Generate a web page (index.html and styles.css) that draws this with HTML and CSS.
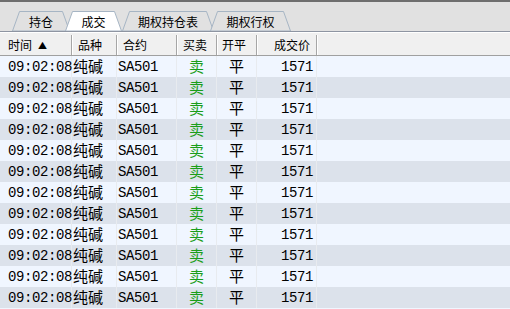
FILE: index.html
```html
<!DOCTYPE html>
<html lang="zh">

<head>
    <meta charset="UTF-8">
    <title>成交</title>
    <link rel="stylesheet" href="styles.css">
</head>

<body>
    <div class="topbar"></div>

    <!-- tabs -->
    <div class="tabbar">
        <div class="tab t1">
            <svg width="58" height="20"><polygon points="0.5,20 7.5,0.5 50.5,0.5 57.5,20" /></svg>
            持仓
        </div>
        <div class="tab t2 active">
            <svg width="57" height="20"><polygon points="0.5,20 7.5,0.5 49.5,0.5 56.5,20" /></svg>
            成交
        </div>
        <div class="tab t3">
            <svg width="92" height="20"><polygon points="0.5,20 7.5,0.5 84.5,0.5 91.5,20" /></svg>
            期权持仓表
        </div>
        <div class="tab t4">
            <svg width="81" height="20"><polygon points="0.5,20 7.5,0.5 73.5,0.5 80.5,20" /></svg>
            期权行权
        </div>
    </div>

    <!-- header -->
    <div class="head">
        <div class="hc c-time">时间<span class="sort">▲</span></div>
        <div class="hc c-var">品种</div>
        <div class="hc c-code">合约</div>
        <div class="hc c-side">买卖</div>
        <div class="hc c-oc">开平</div>
        <div class="hc c-price">成交价</div>
    </div>

    <!-- trades -->
    <div class="list">
        <div class="row"><div class="c c-time">09:02:08</div><div class="c c-var">纯碱</div><div class="c c-code">SA501</div><div class="c c-side">卖</div><div class="c c-oc">平</div><div class="c c-price">1571</div></div>
        <div class="row"><div class="c c-time">09:02:08</div><div class="c c-var">纯碱</div><div class="c c-code">SA501</div><div class="c c-side">卖</div><div class="c c-oc">平</div><div class="c c-price">1571</div></div>
        <div class="row"><div class="c c-time">09:02:08</div><div class="c c-var">纯碱</div><div class="c c-code">SA501</div><div class="c c-side">卖</div><div class="c c-oc">平</div><div class="c c-price">1571</div></div>
        <div class="row"><div class="c c-time">09:02:08</div><div class="c c-var">纯碱</div><div class="c c-code">SA501</div><div class="c c-side">卖</div><div class="c c-oc">平</div><div class="c c-price">1571</div></div>
        <div class="row"><div class="c c-time">09:02:08</div><div class="c c-var">纯碱</div><div class="c c-code">SA501</div><div class="c c-side">卖</div><div class="c c-oc">平</div><div class="c c-price">1571</div></div>
        <div class="row"><div class="c c-time">09:02:08</div><div class="c c-var">纯碱</div><div class="c c-code">SA501</div><div class="c c-side">卖</div><div class="c c-oc">平</div><div class="c c-price">1571</div></div>
        <div class="row"><div class="c c-time">09:02:08</div><div class="c c-var">纯碱</div><div class="c c-code">SA501</div><div class="c c-side">卖</div><div class="c c-oc">平</div><div class="c c-price">1571</div></div>
        <div class="row"><div class="c c-time">09:02:08</div><div class="c c-var">纯碱</div><div class="c c-code">SA501</div><div class="c c-side">卖</div><div class="c c-oc">平</div><div class="c c-price">1571</div></div>
        <div class="row"><div class="c c-time">09:02:08</div><div class="c c-var">纯碱</div><div class="c c-code">SA501</div><div class="c c-side">卖</div><div class="c c-oc">平</div><div class="c c-price">1571</div></div>
        <div class="row"><div class="c c-time">09:02:08</div><div class="c c-var">纯碱</div><div class="c c-code">SA501</div><div class="c c-side">卖</div><div class="c c-oc">平</div><div class="c c-price">1571</div></div>
        <div class="row"><div class="c c-time">09:02:08</div><div class="c c-var">纯碱</div><div class="c c-code">SA501</div><div class="c c-side">卖</div><div class="c c-oc">平</div><div class="c c-price">1571</div></div>
        <div class="row"><div class="c c-time">09:02:08</div><div class="c c-var">纯碱</div><div class="c c-code">SA501</div><div class="c c-side">卖</div><div class="c c-oc">平</div><div class="c c-price">1571</div></div>
    </div>
</body>

</html>
```

FILE: styles.css
```css
body {
    margin: 0;
    background-color: #f0f6ff;
    font-family: "Noto Sans CJK SC", sans-serif;
    color: #000;
    overflow: hidden;
}

.topbar {
    height: 2px;
    background-color: #6e6e6e;
}

/* tabs */
.tabbar {
    height: 29px;
    background-color: #e1e1e1;
    border-bottom: 1px solid #8e95a2;
    display: flex;
    align-items: flex-end;
    padding-left: 12px;
}

.tab {
    position: relative;
    z-index: 1;
    height: 20px;
    padding-top: 1px;
    box-sizing: border-box;
    display: flex;
    align-items: center;
    justify-content: center;
    font-size: 12px;
}

.tab svg {
    position: absolute;
    left: 0;
    top: 0;
    z-index: -1;
}

.tab polygon {
    fill: #e1e1e1;
    stroke: #a6b5c4;
    stroke-width: 1;
}

.tab.active {
    z-index: 2;
}

.tab.active polygon {
    fill: #fff;
}

.t1 { width: 58px; }
.t2 { width: 57px; margin-left: -5px; }
.t3 { width: 92px; }
.t4 { width: 81px; margin-left: -4px; }

/* header */
.head {
    display: flex;
    align-items: flex-end;
    height: 22px;
    background-color: #f0f0f0;
    border-top: 1px solid #fff;
    border-bottom: 1px solid #a0a0a0;
    font-size: 12px;
}

.hc {
    height: 20px;
    line-height: 19px;
    box-sizing: border-box;
    border-right: 1px solid #a6a6a6;
    box-shadow: 1px 0 0 #fff;
}

.sort {
    font-size: 9px;
    margin-left: 6px;
    vertical-align: 1px;
}

.c-time { width: 72px; flex: none; box-sizing: border-box; }
.c-var { width: 45px; flex: none; box-sizing: border-box; }
.c-code { width: 60px; flex: none; box-sizing: border-box; }
.c-side { width: 40px; flex: none; box-sizing: border-box; }
.c-oc { width: 40px; flex: none; box-sizing: border-box; }
.c-price { width: 60px; flex: none; box-sizing: border-box; }

.hc.c-time { padding-left: 8px; }
.hc.c-var { padding-left: 6px; }
.hc.c-code { padding-left: 6px; }
.hc.c-side { padding-left: 6px; }
.hc.c-oc { padding-left: 5px; }
.hc.c-price { text-align: right; padding-right: 6px; }

/* rows */
.row {
    display: flex;
    height: 21px;
}

.row:nth-child(even) {
    background-color: #dce2eb;
}

.c {
    height: 21px;
    display: flex;
    align-items: center;
    border-right: 1px solid #e8ebef;
    white-space: nowrap;
    line-height: 1;
}

.c.c-time,
.c.c-code,
.c.c-price {
    font-family: "Liberation Mono", monospace;
    font-size: 14px;
    letter-spacing: -0.4px;
    padding-top: 1px;
}

.c.c-var,
.c.c-side,
.c.c-oc {
    font-size: 15px;
    padding-bottom: 2px;
}

.c.c-time { padding-left: 8px; }
.c.c-var { padding-left: 1px; }
.c.c-code { padding-left: 1px; }
.c.c-side { justify-content: center; color: #1a9e1a; }
.c.c-oc { justify-content: center; }
.c.c-price { justify-content: flex-end; padding-right: 3px; }
```
